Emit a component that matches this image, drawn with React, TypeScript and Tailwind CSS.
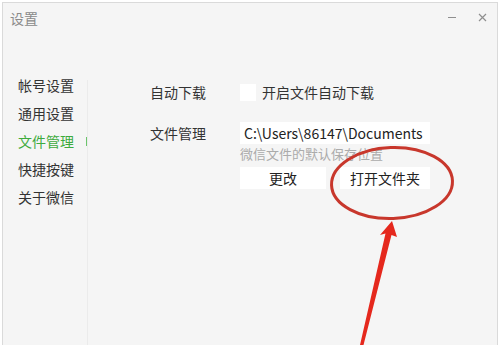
import React from 'react'

const FONT = { fontFamily: '"Noto Sans CJK SC", "Noto Sans", sans-serif' }

const MENU = ['帐号设置', '通用设置', '文件管理', '快捷按键', '关于微信']

function Sidebar() {
  return (
    <div className="w-[84px] pl-[15px] pt-[38px] shrink-0">
      {MENU.map(m => {
        const active = m === '文件管理'
        return (
          <div key={m} className="flex h-[28px] items-center justify-between">
            <span className={['text-[14px] leading-[28px]', active ? 'text-[#3dab3d]' : 'text-[#333]'].join(' ')}>
              {m}
            </span>
            {active && <span className="h-[9px] w-[1.5px] bg-[#6cc46c]" />}
          </div>
        )
      })}
    </div>
  )
}

function Content() {
  return (
    <div className="flex-1 pl-[62px] pt-[51px]">
      {/* 自动下载 */}
      <div className="flex h-[17px] items-center">
        <span className="w-[90px] text-[14px] leading-[17px] text-[#333]">自动下载</span>
        <span className="h-[17px] w-[16px] bg-white" />
        <span className="ml-[6px] text-[14px] leading-[17px] text-[#333]">开启文件自动下载</span>
      </div>

      {/* 文件管理 */}
      <div className="mt-[21px] flex">
        <span className="h-[22px] w-[90px] text-[14px] leading-[22px] text-[#333]">文件管理</span>
        <div className="flex flex-col">
          <div className="h-[22px] w-[190px] bg-white px-[4px] text-[14px] leading-[22px] text-[#222]">
            C:\Users\86147\Documents
          </div>
          <div className="h-[19px] text-[13px] leading-[19px] text-[#ababab]">微信文件的默认保存位置</div>
          <div className="mt-[4px] flex gap-[14px]">
            <button className="h-[22px] w-[86px] bg-white text-[14px] leading-[22px] text-[#222]">更改</button>
            <button className="h-[22px] w-[90px] bg-white text-[14px] leading-[22px] text-[#222]">打开文件夹</button>
          </div>
        </div>
      </div>
    </div>
  )
}

export default function App() {
  return (
    <div className="relative h-[345px] w-[500px] overflow-hidden bg-white" style={FONT}>
      <div className="ml-[2px] mt-[2px] flex h-[343px] w-[496px] flex-col border-l border-r border-t border-[#dadada] bg-[#f5f5f5]">
        {/* title bar */}
        <div className="flex h-[30px] shrink-0 items-start justify-between">
          <span className="pl-[7px] text-[14px] leading-[30px] text-[#8a8a8a]">设置</span>
          <div className="flex shrink-0 pt-[8px]">
            <div className="flex h-[12px] w-[30px] items-center justify-center">
              <span className="block h-[1px] w-[8px] bg-[#8f8f8f]" />
            </div>
            <div className="flex h-[12px] w-[30px] items-center justify-center">
              <svg width="9" height="9" viewBox="0 0 9 9" fill="none" stroke="#8f8f8f" strokeWidth="1.2">
                <path d="M1 1l7 7M8 1L1 8" />
              </svg>
            </div>
          </div>
        </div>

        <div className="flex flex-1">
          <Sidebar />
          <div className="mt-[47px] w-px shrink-0 bg-[#ebebeb]" />
          <Content />
        </div>
      </div>

      {/* red annotation drawn over the screenshot */}
      <svg className="pointer-events-none absolute left-0 top-0" width="500" height="345" viewBox="0 0 500 345">
        <ellipse cx="392" cy="183" rx="60.5" ry="35.5" fill="none" stroke="#c8372c" strokeWidth="3" transform="rotate(-2 392 183)" />
        <polygon points="392,221 397,237 391.5,235 363.5,345 360,345 385.5,233.5 380,235" fill="#e5281d" />
      </svg>
    </div>
  )
}
